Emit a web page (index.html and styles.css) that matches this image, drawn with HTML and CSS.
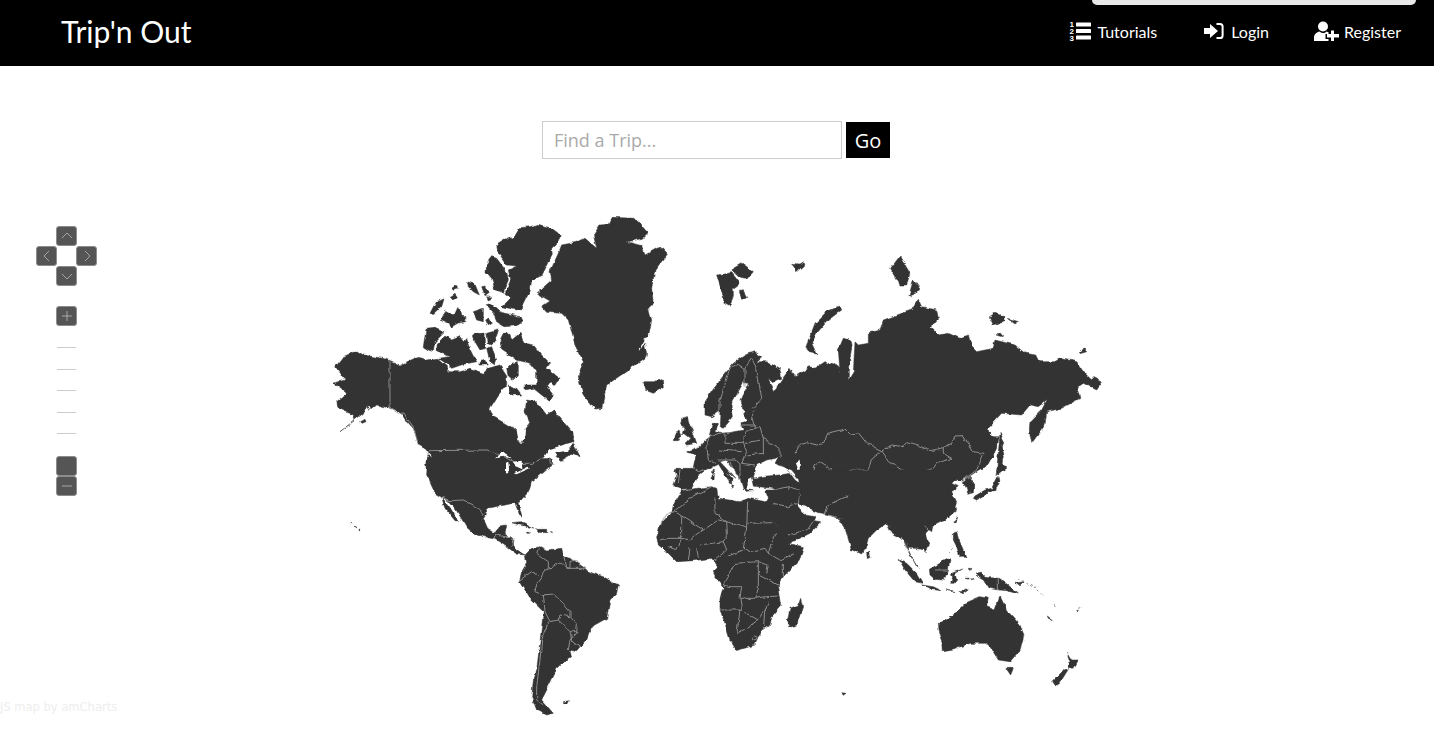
FILE: index.html
```html
<!DOCTYPE html>
<html lang="en">
<head>
<meta charset="utf-8">
<title>Trip'n Out</title>
<link rel="stylesheet" href="styles.css">
</head>
<body>
<header class="topbar">
  <div class="notice"></div>
  <a class="brand">Trip'n Out</a>
  <nav class="nav">
    <a class="nav-link nav-tutorials">
      <svg class="ico" width="22" height="22" viewBox="0 0 22 22"><text class="ico-num" x="0.500" y="7">1</text><text class="ico-num" x="0.500" y="14">2</text><text class="ico-num" x="0.500" y="21">3</text><rect x="7" y="2.500" width="15" height="4" rx=".6"/><rect x="7" y="9" width="15" height="4" rx=".6"/><rect x="7" y="15.500" width="15" height="4" rx=".6"/></svg>
      <span>Tutorials</span></a>
    <a class="nav-link nav-login">
      <svg class="ico" width="20" height="18" viewBox="0 0 20 18"><path d="M0 6h6V2l8 7-8 7v-4H0z"/><path class="ico-line" d="M12.500 2H16a2.600 2.600 0 0 1 2.600 2.600v8.800A2.600 2.600 0 0 1 16 16h-3.500"/></svg>
      <span>Login</span></a>
    <a class="nav-link nav-register">
      <svg class="ico" width="25" height="20" viewBox="0 0 25 20"><circle cx="9" cy="5.500" r="5"/><path d="M0 20v-3.500C0 13 3 11 5.500 10.500 8 12.500 10.500 12.500 12.500 10.500l2 .8V13h-3v5h3v2z"/><path d="M17 9.500h3V13h5v3.500h-5V20h-3v-3.500h-4V13h4z"/></svg>
      <span>Register</span></a>
  </nav>
</header>

<form class="search">
  <input class="search-input" type="text" placeholder="Find a Trip...">
  <button class="search-go" type="button">Go</button>
</form>

<section class="map">
  <div class="controls">
    <div class="pan">
      <button class="ctl pan-up" type="button"><svg width="12" height="12" viewBox="0 0 12 12"><path d="M1 8l5-5 5 5"/></svg></button>
      <button class="ctl pan-left" type="button"><svg width="12" height="12" viewBox="0 0 12 12"><path d="M8 1L3 6l5 5"/></svg></button>
      <button class="ctl pan-right" type="button"><svg width="12" height="12" viewBox="0 0 12 12"><path d="M4 1l5 5-5 5"/></svg></button>
      <button class="ctl pan-down" type="button"><svg width="12" height="12" viewBox="0 0 12 12"><path d="M1 4l5 5 5-5"/></svg></button>
    </div>
    <div class="zoom">
      <button class="ctl" type="button"><svg width="12" height="12" viewBox="0 0 12 12"><path d="M1 6h10M6 1v10"/></svg></button>
      <div class="ticks"><i></i><i></i><i></i><i></i><i></i></div>
      <button class="ctl" type="button"></button>
      <button class="ctl" type="button"><svg width="12" height="12" viewBox="0 0 12 12"><path d="M1 6h10"/></svg></button>
    </div>
  </div>
  <svg class="world" width="1434" height="530" viewBox="0 200 1434 530">
    <defs>
      <filter id="rough" filterUnits="userSpaceOnUse" x="0" y="200" width="1434" height="530" color-interpolation-filters="sRGB">
        <feTurbulence type="fractalNoise" baseFrequency=".13" numOctaves="3" seed="4" result="n"/>
        <feDisplacementMap in="SourceGraphic" in2="n" scale="4" xChannelSelector="R" yChannelSelector="G"/>
        <feGaussianBlur stdDeviation=".3"/>
      </filter>
    </defs>
    <g filter="url(#rough)">
    <!-- Arctic Canada, Alaska, Greenland -->
    <g transform="translate(320 205) scale(.33333)">
      <polygon class="land" points="47,485 70,455 110,437 130,450 200,462 240,480 295,455 320,465 350,460 385,490 385,500 420,500 450,490 490,505 505,490 540,480 560,510 560,540 535,570 510,610 520,635 590,675 600,710 612,712 610,680 630,655 615,620 620,585 650,590 680,630 700,615 755,680 762,710 740,720 700,740 660,780 320,780 325,740 295,720 285,680 260,650 240,620 210,610 170,600 145,620 140,600 130,625 60,680 105,645 100,630 55,610 50,590 80,565 40,535 75,525 50,490"/>
      <polygon class="land" points="875,37 945,40 985,85 970,100 920,110 965,122 975,150 1020,125 1042,148 1005,195 995,250 1000,295 985,310 995,345 985,395 970,400 980,445 975,460 925,495 860,540 845,610 825,612 790,570 775,515 790,470 768,430 745,345 725,325 680,322 665,305 690,288 650,265 695,225 690,200 715,145 725,120 775,110 795,100 830,130 820,90 840,60 865,58"/>
      <polygon class="land" points="530,120 570,95 580,100 600,68 630,65 655,58 695,70 722,90 715,110 695,130 697,150 665,212 635,225 630,260 610,300 605,318 545,305 572,280 555,265 572,225 565,195 590,183 558,180 535,145"/>
      <polygon class="land" points="515,155 530,160 560,200 565,225 550,262 525,255 515,220 498,200 500,175"/>
      <polygon class="land" points="395,250 405,243 412,252 400,256"/>
      <polygon class="land" points="390,275 405,265 412,275 398,285"/>
      <polygon class="land" points="330,325 348,290 372,282 365,305 345,325"/>
      <polygon class="land" points="442,230 465,238 478,270 460,260 445,245"/>
      <polygon class="land" points="485,245 495,243 505,265 495,272"/>
      <polygon class="land" points="500,275 515,280 505,285"/>
      <polygon class="land" points="362,345 375,315 400,330 410,308 422,315 425,330 438,335 437,350 410,355 390,367 385,355"/>
      <polygon class="land" points="460,320 490,310 490,350 470,345"/>
      <polygon class="land" points="497,345 507,338 517,355 505,362"/>
      <polygon class="land" points="497,300 512,295 540,320 600,335 607,350 590,362 555,365 530,350 520,325"/>
      <polygon class="land" points="318,370 345,367 375,380 345,410 340,440 325,435 310,425"/>
      <polygon class="land" points="352,415 375,393 395,405 420,395 430,410 440,398 445,420 470,470 430,478 395,490 385,480 355,460 392,455 365,445 350,435"/>
      <polygon class="land" points="460,395 470,385 495,385 497,430 480,435 465,410"/>
      <polygon class="land" points="500,385 535,375 530,395 515,420 505,415"/>
      <polygon class="land" points="500,430 515,425 530,465 525,480 510,470"/>
      <polygon class="land" points="480,470 490,460 505,480 480,480"/>
      <polygon class="land" points="540,405 550,385 570,385 575,405 600,385 612,415 640,420 665,450 690,475 680,490 720,520 705,545 690,530 680,545 700,570 690,590 640,550 615,555 615,540 650,540 650,500 630,475 590,465 560,445 545,435"/>
      <polygon class="land" points="575,475 595,470 595,510 575,525 565,515 560,490"/>
      <polygon class="land" points="565,540 590,550 605,570 580,570 570,565"/>
      <polygon class="water" points="622,495 635,490 637,510 625,512"/>
      <polygon class="land" points="968,530 1000,530 1030,522 1033,545 1000,565 975,555"/>
      <polygon class="land" points="122,650 135,643 138,650 126,655"/>
      <polygon class="water" points="262,685 270,688 274,705 265,700"/>
      <polyline class="shore" points="145,600 150,610 142,622"/>
      <polyline class="shore" points="958,440 975,412"/>
      <polyline class="line" points="210,465 210,608 235,625 250,620 285,680 295,720"/>
    </g>
    <!-- North America south, South America -->
    <g transform="translate(340 440) scale(.33333)">
      <polygon class="land" points="235,0 235,15 268,35 262,60 260,105 285,160 305,172 325,182 345,205 362,232 380,262 400,280 440,292 465,298 500,320 530,342 555,345 530,330 520,315 522,295 500,293 495,280 500,255 478,258 465,278 445,270 430,235 445,205 480,197 525,190 540,228 545,225 535,190 565,155 575,125 605,100 640,70 670,58 700,40 700,0"/>
      <polygon class="land" points="305,172 325,195 355,243 345,242 315,205 308,185"/>
      <polygon class="water" points="235,15 268,35 272,50 262,36 240,22"/>
      <polygon class="land" points="555,345 575,325 600,320 620,330 665,325 670,345 700,360 735,385 745,395 790,410 835,435 830,460 810,480 800,535 755,560 740,600 710,635 690,630 695,650 665,670 650,685 645,700 625,740 605,780 640,820 620,825 590,810 575,770 580,720 590,690 605,560 610,515 565,470 538,425 545,395 560,370"/>
      <polygon class="land" points="515,248 545,245 585,265 570,262 540,255"/>
      <polygon class="land" points="590,268 620,268 620,278 597,277"/>
      <polygon class="land" points="556,277 568,277 566,280 558,280"/>
      <polygon class="land" points="628,275 638,276 636,278"/>
      <polygon class="land" points="670,785 688,782 685,790 672,790"/>
      <circle class="land" cx="57" cy="267" r="3"/>
      <polygon class="land" points="30,250 35,252 33,253"/>
      <polygon class="land" points="42,256 48,259 46,260"/>
      <polyline class="line" points="270,32 445,30 470,40 530,70 580,70 605,55 625,50 628,70 650,68"/>
      <polyline class="line" points="305,172 330,182 370,180 400,195 430,225"/>
      <polyline class="line" points="465,298 470,285 495,290 520,295 515,320"/>
      <polyline class="line" points="595,325 590,340 610,355 625,365 625,385 610,395 605,410 590,430 585,455 610,465 640,462 670,490 690,515 690,530 712,555 710,575 690,575 655,540 660,525 690,530"/>
      <polyline class="line" points="625,385 645,380 650,370 665,370 680,385 735,385"/>
      <polyline class="line" points="670,345 680,382 690,385 690,365 710,360 720,380"/>
      <polyline class="line" points="540,420 575,395 605,410"/>
      <polyline class="line" points="610,465 615,515 630,545 655,540"/>
      <polyline class="line" points="625,545 605,600 600,660 590,740 590,780 610,795"/>
      <polyline class="line" points="690,575 695,600 720,620"/>
      <polyline class="line" points="710,575 690,600 685,630"/>
    </g>
    <!-- Great Lakes and St Lawrence -->
    <g transform="translate(480 430) scale(.33333)">
      <polygon class="water" points="110,0 135,0 133,25 125,42 115,30"/>
      <polygon class="water" points="45,85 70,65 95,85 70,80"/>
      <polygon class="water" points="75,100 85,95 88,125 75,128"/>
      <polygon class="water" points="95,95 125,92 127,118 105,108"/>
      <polygon class="water" points="105,130 145,110 150,115 110,133"/>
      <polygon class="water" points="190,85 207,58 282,35 262,62 225,68 240,90 250,95 225,100 205,85"/>
      <polygon class="land" points="262,60 282,42 300,80 282,72"/>
      <polygon class="land" points="228,82 232,78 250,92 242,94"/>
    </g>
    <!-- Russia, Scandinavia and Arctic islands -->
    <g transform="translate(700 240) scale(.33333)">
      <polygon class="land" points="15,485 60,420 100,370 135,345 165,335 185,350 170,365 200,365 240,390 245,415 215,425 205,415 220,455 245,420 270,385 285,410 330,380 345,385 375,365 415,380 420,395 415,330 430,295 450,300 455,325 445,390 445,420 460,395 465,305 475,315 505,310 505,280 540,270 550,240 600,222 635,210 655,178 665,200 710,210 715,235 692,262 715,285 745,280 780,295 805,285 815,320 830,335 880,325 885,300 945,315 975,340 1010,345 1020,365 1065,365 1080,355 1130,365 1150,395 1175,420 1180,410 1208,425 1190,450 1150,430 1130,440 1140,475 1085,505 1040,515 1035,555 995,610 988,570 990,545 1025,510 1042,478 1015,500 990,495 965,525 905,520 857,570 880,590 895,590 880,650 850,680 800,715 760,720 330,720 280,650 240,640 155,640 150,560 165,520 135,518 125,505 120,480 145,430 130,428 95,490 100,530 70,565 58,560 60,510 35,530 15,525"/>
      <polygon class="land" points="318,320 345,250 380,215 420,198 425,210 385,240 350,280 335,310 350,342 328,338"/>
      <polygon class="land" points="50,105 95,98 120,130 100,145 100,165 90,200 72,190 70,170"/>
      <polygon class="land" points="95,90 125,72 157,95 140,115 115,110"/>
      <polygon class="land" points="118,155 130,152 140,170 125,178"/>
      <polygon class="land" points="275,70 300,72 312,65 315,72 290,95 285,80"/>
      <polygon class="land" points="572,85 600,48 630,100 620,135 600,135"/>
      <polygon class="land" points="640,120 662,150 627,165"/>
      <polygon class="land" points="868,230 885,220 915,230 915,245 880,255"/>
      <polygon class="land" points="925,235 955,245 945,252"/>
      <polygon class="land" points="888,285 900,278 910,290"/>
      <polygon class="land" points="1138,335 1150,325 1160,335 1145,340"/>
      <polygon class="land" points="888,710 900,585 910,640 905,680 920,685 890,705"/>
      <polyline class="line" points="115,370 90,385 60,480 60,510"/>
      <polyline class="line" points="115,370 135,385 135,440"/>
      <polyline class="line" points="135,385 155,355 170,385 185,475 160,505"/>
    </g>
    <!-- Europe and Middle East -->
    <g transform="translate(660 400) scale(.33333)">
      <polygon class="land" points="300,0 285,30 248,42 262,62 243,70 250,90 205,98 180,100 165,95 172,70 160,70 150,110 128,128 118,140 80,155 108,165 100,205 48,205 45,215 50,230 40,255 48,262 65,268 95,265 113,228 140,208 175,192 205,240 208,250 218,252 218,238 200,215 225,235 205,212 180,185 200,180 240,235 250,270 262,270 262,240 280,232 285,215 290,195 320,180 345,175 355,170 345,190 395,210 420,240 540,240 540,0"/>
      <polygon class="land" points="275,235 320,228 360,225 390,220 405,240 425,255 540,250 540,340 475,335 450,315 415,310 375,300 335,300 345,270 335,265 280,258"/>
      <polygon class="land" points="65,55 80,50 85,75 95,85 105,115 110,130 80,135 75,130 90,115 70,100 75,85 62,75"/>
      <polygon class="land" points="45,98 60,90 65,102 55,122 40,122"/>
      <polygon class="land" points="158,208 163,208 163,220 158,220"/>
      <polygon class="land" points="156,225 163,225 162,240 157,240"/>
      <polygon class="land" points="215,255 222,255 218,262"/>
      <polygon class="land" points="255,268 280,272 258,274"/>
      <polygon class="water" points="405,190 425,175 445,178 430,195 420,205 425,230 450,250 445,262 425,258 420,235"/>
      <polyline class="line" points="150,110 140,135 145,180 165,190"/>
      <polyline class="line" points="150,110 195,100 195,130 250,130 255,95 300,80 310,115 360,145 360,170"/>
      <polyline class="line" points="285,30 275,50 285,85"/>
      <polyline class="line" points="250,130 260,155 245,190 285,195"/>
      <polyline class="line" points="180,150 245,155"/>
      <polyline class="line" points="175,180 225,180 240,190 240,240"/>
      <polyline class="line" points="210,185 230,230"/>
      <polyline class="line" points="60,208 55,250"/>
      <polyline class="line" points="100,205 115,215 130,210"/>
      <polyline class="line" points="260,165 310,160 310,115"/>
      <polyline class="line" points="240,75 285,75"/>
      <polyline class="line" points="300,120 255,130"/>
      <polyline class="line" points="380,210 405,230 415,235"/>
      <polyline class="line" points="340,270 385,260 420,270 415,310"/>
      <polyline class="line" points="385,260 375,300"/>
      <polyline class="line" points="450,265 495,260 510,270 495,300 510,330"/>
      <polyline class="line" points="465,215 500,195 530,210"/>
      <polyline class="line" points="405,160 425,125 495,130 500,105 540,90"/>
    </g>
    <!-- East Asia -->
    <g transform="translate(800 420) scale(.33333)">
      <polygon class="land" points="0,0 585,0 555,30 590,60 590,85 560,140 530,150 490,180 472,180 470,168 445,185 475,200 455,215 472,250 465,270 440,295 410,310 388,328 372,345 385,375 375,390 345,385 325,385 322,370 310,350 295,350 280,310 260,310 230,330 205,355 195,390 155,390 135,325 115,295 85,285 50,270 0,250"/>
      <polygon class="land" points="490,185 510,170 522,190 520,215 503,220 497,200"/>
      <polygon class="land" points="520,235 525,228 555,210 575,205 590,175 597,170 600,185 590,205 565,220 530,240"/>
      <polygon class="land" points="590,150 600,135 620,143 605,155 595,165"/>
      <polygon class="land" points="600,40 612,65 605,85 613,110 600,120"/>
      <polyline class="line" points="0,70 20,65 50,75 75,70 80,40 135,27 150,42 175,38 200,70 245,92"/>
      <polyline class="line" points="245,92 275,75 310,80 320,65 345,72 390,92 425,85 455,70 465,48 490,47 520,95 552,100 530,150 490,180"/>
      <polyline class="line" points="245,92 268,125 305,150 360,158 400,145 410,130 455,115 430,100 430,85"/>
      <polyline class="line" points="245,92 215,115 205,150 150,150 125,175 100,155 85,140 60,125 45,135 40,165"/>
      <polyline class="line" points="40,150 80,165 120,195 80,215 50,190 0,200"/>
      <polyline class="line" points="80,215 75,250 85,285 135,295 150,260 170,225 145,200 120,195"/>
      <polyline class="line" points="120,175 150,165 165,180 125,180"/>
      <polyline class="line" points="170,205 190,245 210,265 260,270 300,260 320,270 320,310 345,310 370,305 380,330"/>
      <polyline class="line" points="200,255 255,285 280,280"/>
      <polyline class="line" points="255,270 262,308"/>
      <polyline class="line" points="280,310 295,300 310,350 320,385"/>
      <polyline class="line" points="345,310 375,370 345,385"/>
      <polyline class="line" points="315,335 345,325 355,360"/>
    </g>
    <!-- Africa, South and Southeast Asia, Oceania -->
    <g transform="translate(640 470) scale(.33333)">
      <polygon class="land" points="125,62 150,58 215,50 230,55 235,85 300,95 325,85 385,97 400,150 445,220 490,230 478,270 430,320 415,345 420,375 425,405 395,440 390,465 365,480 345,525 290,542 270,510 255,460 240,420 240,385 250,350 225,320 220,305 235,290 215,265 160,272 110,275 85,250 55,225 50,205 60,165 100,120 105,95"/>
      <polygon class="land" points="375,60 480,60 470,105 495,135 525,140 520,152 545,155 510,190 445,222 400,150 375,105 385,85"/>
      <polygon class="land" points="470,0 490,100 515,120 535,128 570,133 610,145 640,240 665,252 680,220 680,195 735,150 755,190 775,200 795,215 805,240 830,290 835,295 810,255 797,205 800,185 840,230 855,245 868,225 860,195 840,170 865,165 870,155 915,150 950,120 940,80 925,50 945,30 900,0"/>
      <polygon class="land" points="778,270 800,280 830,310 848,340 825,335 795,300"/>
      <polygon class="land" points="845,345 880,350 905,362 870,358"/>
      <polygon class="land" points="918,360 945,368 930,363"/>
      <polygon class="land" points="960,365 985,358 965,372"/>
      <polygon class="land" points="868,298 900,280 915,265 930,270 925,300 912,330 885,328 870,315"/>
      <polygon class="land" points="935,310 968,297 945,310 950,330 942,340 932,340 938,325"/>
      <polygon class="land" points="1005,312 1025,310 1035,322 1075,325 1105,345 1135,372 1100,362 1075,360 1045,355 1030,330 1015,322"/>
      <polygon class="land" points="940,190 950,185 955,205 970,240 978,262 960,262 950,230 940,210"/>
      <polygon class="land" points="940,155 950,140 945,160"/>
      <polygon class="land" points="865,178 878,170 875,185"/>
      <polygon class="land" points="680,250 686,246 690,262 682,266"/>
      <polygon class="land" points="985,295 992,295 990,305"/>
      <polygon class="land" points="975,325 1005,323 985,328"/>
      <polygon class="land" points="1125,340 1150,335 1140,345"/>
      <polygon class="land" points="482,385 488,410 470,465 450,472 442,450 450,415 475,405"/>
      <polygon class="land" points="895,460 940,435 975,400 1020,380 1045,385 1040,410 1065,420 1080,378 1100,420 1140,465 1152,495 1140,540 1110,575 1075,570 1050,530 1040,520 990,520 940,540 910,545 908,510 897,480"/>
      <polygon class="land" points="1098,595 1120,595 1112,615"/>
      <polygon class="land" points="1280,545 1295,570 1315,570 1300,598 1285,595 1290,575"/>
      <polygon class="land" points="1275,595 1285,598 1265,630 1245,645 1238,635"/>
      <polygon class="land" points="605,668 618,670 610,676"/>
      <polygon class="land" points="1222,438 1240,452 1225,445"/>
      <polygon class="land" points="1310,422 1315,420 1313,425"/>
      <polyline class="fine" points="922,248 935,235"/>
      <polyline class="fine" points="1160,340 1180,352 1210,375"/>
      <polyline class="fine" points="1240,403 1245,412"/>
      <polyline class="fine" points="1315,415 1325,411"/>
      <polyline class="fine" points="1135,325 1150,335"/>
      <polyline class="line" points="105,125 150,85 215,50"/>
      <polyline class="line" points="225,85 225,130 260,155 320,175 323,95"/>
      <polyline class="line" points="323,160 400,158"/>
      <polyline class="line" points="60,165 80,130 105,125 190,180 235,150 260,155"/>
      <polyline class="line" points="125,140 125,205 85,205 60,210"/>
      <polyline class="line" points="190,180 150,210 125,205 110,240 85,230"/>
      <polyline class="line" points="260,155 262,190 250,215 260,240 225,270"/>
      <polyline class="line" points="320,175 310,235 330,245 375,235 385,250 395,215 410,190"/>
      <polyline class="line" points="385,250 420,270 465,250"/>
      <polyline class="line" points="430,285 430,320"/>
      <polyline class="line" points="180,225 250,215"/>
      <polyline class="line" points="150,235 145,270"/>
      <polyline class="line" points="170,235 175,265"/>
      <polyline class="line" points="260,260 310,240"/>
      <polyline class="line" points="285,280 355,275 355,315 355,355 345,385 300,385 305,350 270,350 250,345 285,280"/>
      <polyline class="line" points="355,315 415,345"/>
      <polyline class="line" points="355,275 385,285 380,310"/>
      <polyline class="line" points="240,420 300,420 355,450 375,415 385,400"/>
      <polyline class="line" points="300,420 290,495"/>
      <polyline class="line" points="345,385 380,380 420,378"/>
      <polyline class="line" points="300,385 305,420"/>
      <polyline class="line" points="375,415 370,480"/>
      <polyline class="line" points="355,450 295,490"/>
      <circle class="line" cx="344" cy="505" r="7"/>
      <polyline class="line" points="400,100 445,110 470,100"/>
      <polyline class="line" points="445,195 500,180 520,150"/>
      <polyline class="line" points="555,135 565,105 625,75"/>
      <polyline class="line" points="1072,325 1072,360"/>
      <polyline class="line" points="885,300 925,300"/>
    </g>
    </g>
  </svg>
  <a class="credit">JS map by amCharts</a>
</section>
</body>
</html>
```

FILE: styles.css
```css
* { box-sizing: border-box; }
html, body { margin: 0; padding: 0; background: #fff; }
body { font-family: "Lato", "Liberation Sans", sans-serif; overflow: hidden; }

.topbar {
  position: relative;
  height: 66px;
  background: #000;
  color: #fff;
  display: flex;
  align-items: center;
  justify-content: space-between;
  padding: 0 33px 4px 61px;
}
.notice {
  position: absolute;
  top: 0;
  right: 18px;
  width: 324px;
  height: 5px;
  background: #e8e8e8;
  border-radius: 0 0 8px 8px;
}
.brand { font-size: 30px; font-weight: 400; }
.nav { display: flex; align-items: center; }
.nav-link { display: flex; align-items: center; font-size: 16px; font-weight: 400; }
.nav-tutorials { gap: 6px; }
.nav-login { gap: 7px; margin-left: 47px; }
.nav-register { gap: 5px; margin-left: 45px; }
.ico { fill: #fff; display: block; }
.ico-num { font-family: "Liberation Sans", sans-serif; font-size: 8px; font-weight: 700; fill: #fff; }
.ico-line { fill: none; stroke: #fff; stroke-width: 2; }

.search {
  display: flex;
  justify-content: center;
  align-items: center;
  gap: 4px;
  margin: 55px 0 0;
  padding-right: 2px;
}
.search-input {
  width: 300px;
  height: 38px;
  border: 1px solid #ccc;
  padding: 0 11px;
  font: 18px "Open Sans", sans-serif;
  color: #333;
  outline: none;
}
.search-input::placeholder { color: #aaa; opacity: 1; }
.search-go {
  width: 44px;
  height: 36px;
  border: 0;
  padding: 0;
  background: #000;
  color: #fff;
  font: 20px "Open Sans", sans-serif;
}

.map { position: relative; height: 530px; margin-top: 41px; }
.world { display: block; }
.land { fill: #333; stroke: #333; stroke-width: .5px; vector-effect: non-scaling-stroke; }
.water { fill: #fff; stroke: none; }
.line { fill: none; stroke: #999; stroke-width: .9px; vector-effect: non-scaling-stroke; stroke-linejoin: round; }
.shore { fill: none; stroke: #fff; stroke-width: 1.2px; vector-effect: non-scaling-stroke; }
.fine { fill: none; stroke: #555; stroke-width: .7px; vector-effect: non-scaling-stroke; stroke-dasharray: 2 2; }

.controls { position: absolute; left: 36px; top: 26px; z-index: 2; }
.ctl {
  display: flex;
  align-items: center;
  justify-content: center;
  width: 21px;
  height: 20px;
  padding: 0;
  border: 1px solid #8c8c8c;
  border-radius: 3px;
  background: #555;
}
.ctl svg { fill: none; stroke: #bbb; stroke-width: .8; display: block; }
.pan { display: grid; grid-template-columns: 20px 20px 20px; grid-template-rows: 20px 20px 20px; }
.pan-up { grid-column: 2; grid-row: 1; }
.pan-left { grid-column: 1; grid-row: 2; }
.pan-right { grid-column: 3; grid-row: 2; }
.pan-down { grid-column: 2; grid-row: 3; }
.zoom { margin: 20px 0 0 20px; width: 21px; }
.ticks {
  display: flex;
  flex-direction: column;
  gap: 20.6px;
  height: 130px;
  padding: 21px 1px 0;
}
.ticks i { display: block; height: 1px; background: #ccc; }
.credit {
  position: absolute;
  left: 0;
  top: 500px;
  font: 11.500px "DejaVu Sans", sans-serif;
  color: #eee;
}
```
